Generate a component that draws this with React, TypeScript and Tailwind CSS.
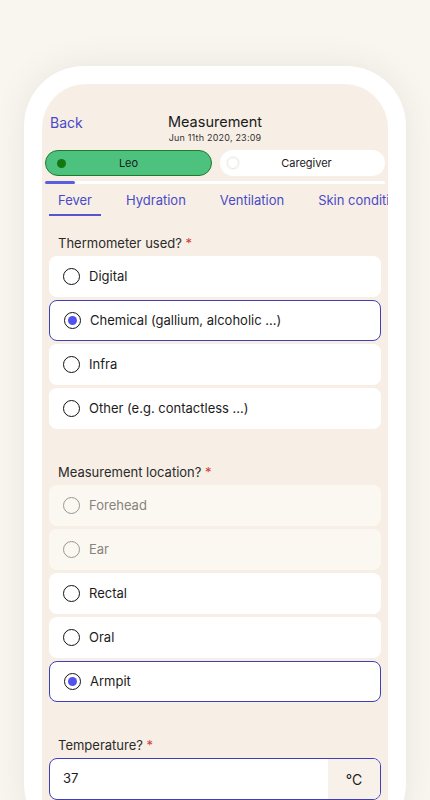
import React from 'react';

type Option = { label: string; selected?: boolean; disabled?: boolean };

const thermometers: Option[] = [
  { label: 'Digital' },
  { label: 'Chemical (gallium, alcoholic ...)', selected: true },
  { label: 'Infra' },
  { label: 'Other (e.g. contactless ...)' },
];

const locations: Option[] = [
  { label: 'Forehead', disabled: true },
  { label: 'Ear', disabled: true },
  { label: 'Rectal' },
  { label: 'Oral' },
  { label: 'Armpit', selected: true },
];

const tabs = ['Fever', 'Hydration', 'Ventilation', 'Skin condition'];

function Radio({ selected, disabled }: { selected?: boolean; disabled?: boolean }) {
  return (
    <span
      className={`flex h-[17px] w-[17px] shrink-0 items-center justify-center rounded-full border-[1.5px] ${
        disabled ? 'border-[#9a9692]' : 'border-[#111]'
      }`}
    >
      {selected && <span className="h-[9px] w-[9px] rounded-full bg-[#5252ee]" />}
    </span>
  );
}

function OptionCard({ option }: { option: Option }) {
  return (
    <div
      className={`flex h-[41px] items-center gap-[9px] rounded-[8px] pl-[14px] ${
        option.selected
          ? 'border-[1.5px] border-[#3f3fba] bg-white pl-[12.5px]'
          : option.disabled
            ? 'bg-[#fbf7f1]'
            : 'bg-white'
      }`}
    >
      <Radio selected={option.selected} disabled={option.disabled} />
      <span className={`text-[13px] ${option.disabled ? 'text-[#868380]' : 'text-[#1c1c1c]'}`}>{option.label}</span>
    </div>
  );
}

function Label({ text }: { text: string }) {
  return (
    <div className="mb-[3px] pl-[9px] text-[13px] leading-5 text-[#2a2a2a]">
      {text} <span className="text-[#d23b3b]">*</span>
    </div>
  );
}

export default function App() {
  return (
    <div
      className="h-[800px] overflow-hidden bg-[#f9f5ef] pt-[66px] pl-[24px]"
      style={{ fontFamily: 'Inter, "Noto Sans", sans-serif' }}
    >
      <div className="w-[382px] rounded-[60px] bg-white p-[18px] pb-0 shadow-[0_0_36px_rgba(0,0,0,0.07)]">
        <div className="h-[760px] overflow-hidden rounded-t-[44px] bg-[#f7efe5]">
          {/* Header */}
          <div className="grid grid-cols-[1fr_auto_1fr] items-start px-[8px] pt-[29px]">
            <span className="text-[14px] leading-5 text-[#4848c9]">Back</span>
            <div className="flex flex-col items-center">
              <span className="text-[14.5px] leading-[18px] text-[#1a1a1a]">Measurement</span>
              <span className="mt-[1px] text-[9px] leading-3 tracking-[0.2px] text-[#333]">Jun 11th 2020, 23:09</span>
            </div>
            <span />
          </div>

          {/* Person toggle */}
          <div className="mt-[6px] flex gap-[8px] px-[3px]">
            <div className="relative flex h-[26px] flex-1 items-center justify-center rounded-full border-[1.5px] border-[#1f7a2e] bg-[#4cc27e]">
              <span className="absolute left-[11px] h-[9px] w-[9px] rounded-full bg-[#13780f]" />
              <span className="text-[11px] text-[#1a1a1a]">Leo</span>
            </div>
            <div className="relative flex h-[26px] flex-1 items-center justify-center rounded-full bg-white">
              <span className="absolute left-[7px] h-[12px] w-[12px] rounded-full border border-[#eceae6] bg-white shadow-[0_0_3px_rgba(0,0,0,0.08)]" />
              <span className="pl-[8px] text-[11px] text-[#1a1a1a]">Caregiver</span>
            </div>
          </div>

          {/* Progress */}
          <div className="mx-[3px] mt-[5px] h-[3px] rounded-full bg-white">
            <div className="h-[3px] w-[30px] rounded-full bg-[#5a5ee0]" />
          </div>

          {/* Tabs */}
          <div className="mt-[6px] flex gap-4 overflow-hidden whitespace-nowrap pl-[7px]">
            {tabs.map((t, i) => (
              <div key={t} className="flex shrink-0 flex-col">
                <span className="px-[9px] text-[13px] leading-5 text-[#4a4ac8]">{t}</span>
                <span className={`mt-[4px] h-[2px] ${i === 0 ? 'bg-[#5656cc]' : 'bg-transparent'}`} />
              </div>
            ))}
          </div>

          <div className="px-[7px] pt-[17px]">
            <Label text="Thermometer used?" />
            <div className="flex flex-col gap-[3px]">
              {thermometers.map(o => (
                <OptionCard key={o.label} option={o} />
              ))}
            </div>

            <div className="mt-[33px]">
              <Label text="Measurement location?" />
              <div className="flex flex-col gap-[3px]">
                {locations.map(o => (
                  <OptionCard key={o.label} option={o} />
                ))}
              </div>
            </div>

            <div className="mt-[33px]">
              <Label text="Temperature?" />
              <div className="flex h-[42px] overflow-hidden rounded-[8px] border-[1.5px] border-[#3f3fba] bg-white">
                <span className="flex flex-1 items-center pl-[13px] text-[13px] text-[#1c1c1c]">37</span>
                <span className="flex w-[52px] items-center justify-center bg-[#f7f1e9] text-[14px] text-[#1c1c1c]">°C</span>
              </div>
            </div>
          </div>
        </div>
      </div>
    </div>
  );
}
